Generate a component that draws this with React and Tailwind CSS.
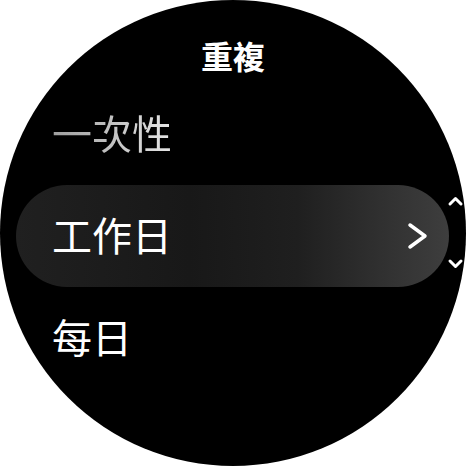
import React from "react";

const font = { fontFamily: '"Noto Sans CJK TC", "Noto Sans", sans-serif' };

export default function App() {
  return (
    <div className="w-[466px] h-[466px] bg-white">
      <div
        className="relative w-[466px] h-[466px] rounded-full bg-black overflow-hidden flex flex-col"
        style={font}
      >
        <div className="pt-[35px] h-[84px] text-center text-white font-bold text-[32px] leading-[40px]">
          重複
        </div>
        <div className="flex flex-col">
          <div className="h-[101px] flex items-center pl-[52px] pb-[5px]">
            <span className="text-[40px] leading-[48px] bg-[linear-gradient(90deg,#9e9e9e,#e6e6e6)] bg-clip-text text-transparent">
              一次性
            </span>
          </div>
          <div className="ml-[16px] w-[433px] h-[102px] rounded-full bg-[linear-gradient(90deg,#202020_0%,#181818_40%,#1f1f1f_65%,#3e3e3e_100%)] flex items-center justify-between pl-[36px] pr-[20px]">
            <span className="text-white text-[40px] leading-[48px] pb-[4px]">工作日</span>
            <svg width="22" height="28" viewBox="0 0 22 28" fill="none">
              <polyline
                points="3,3 18,14 3,25"
                stroke="white"
                strokeWidth="3.5"
                strokeLinecap="round"
                strokeLinejoin="round"
              />
            </svg>
          </div>
          <div className="h-[101px] flex items-center pl-[52px] pb-[4px]">
            <span className="text-white text-[40px] leading-[48px]">每日</span>
          </div>
        </div>
        <svg
          className="absolute left-[447px] top-[195px]"
          width="17"
          height="12"
          viewBox="0 0 17 12"
          fill="none"
        >
          <polyline
            points="3,9 8.5,3.5 14,9"
            stroke="white"
            strokeWidth="3"
            strokeLinecap="round"
            strokeLinejoin="round"
          />
        </svg>
        <svg
          className="absolute left-[447px] top-[258px]"
          width="17"
          height="12"
          viewBox="0 0 17 12"
          fill="none"
        >
          <polyline
            points="3,3 8.5,8.5 14,3"
            stroke="white"
            strokeWidth="3"
            strokeLinecap="round"
            strokeLinejoin="round"
          />
        </svg>
      </div>
    </div>
  );
}
